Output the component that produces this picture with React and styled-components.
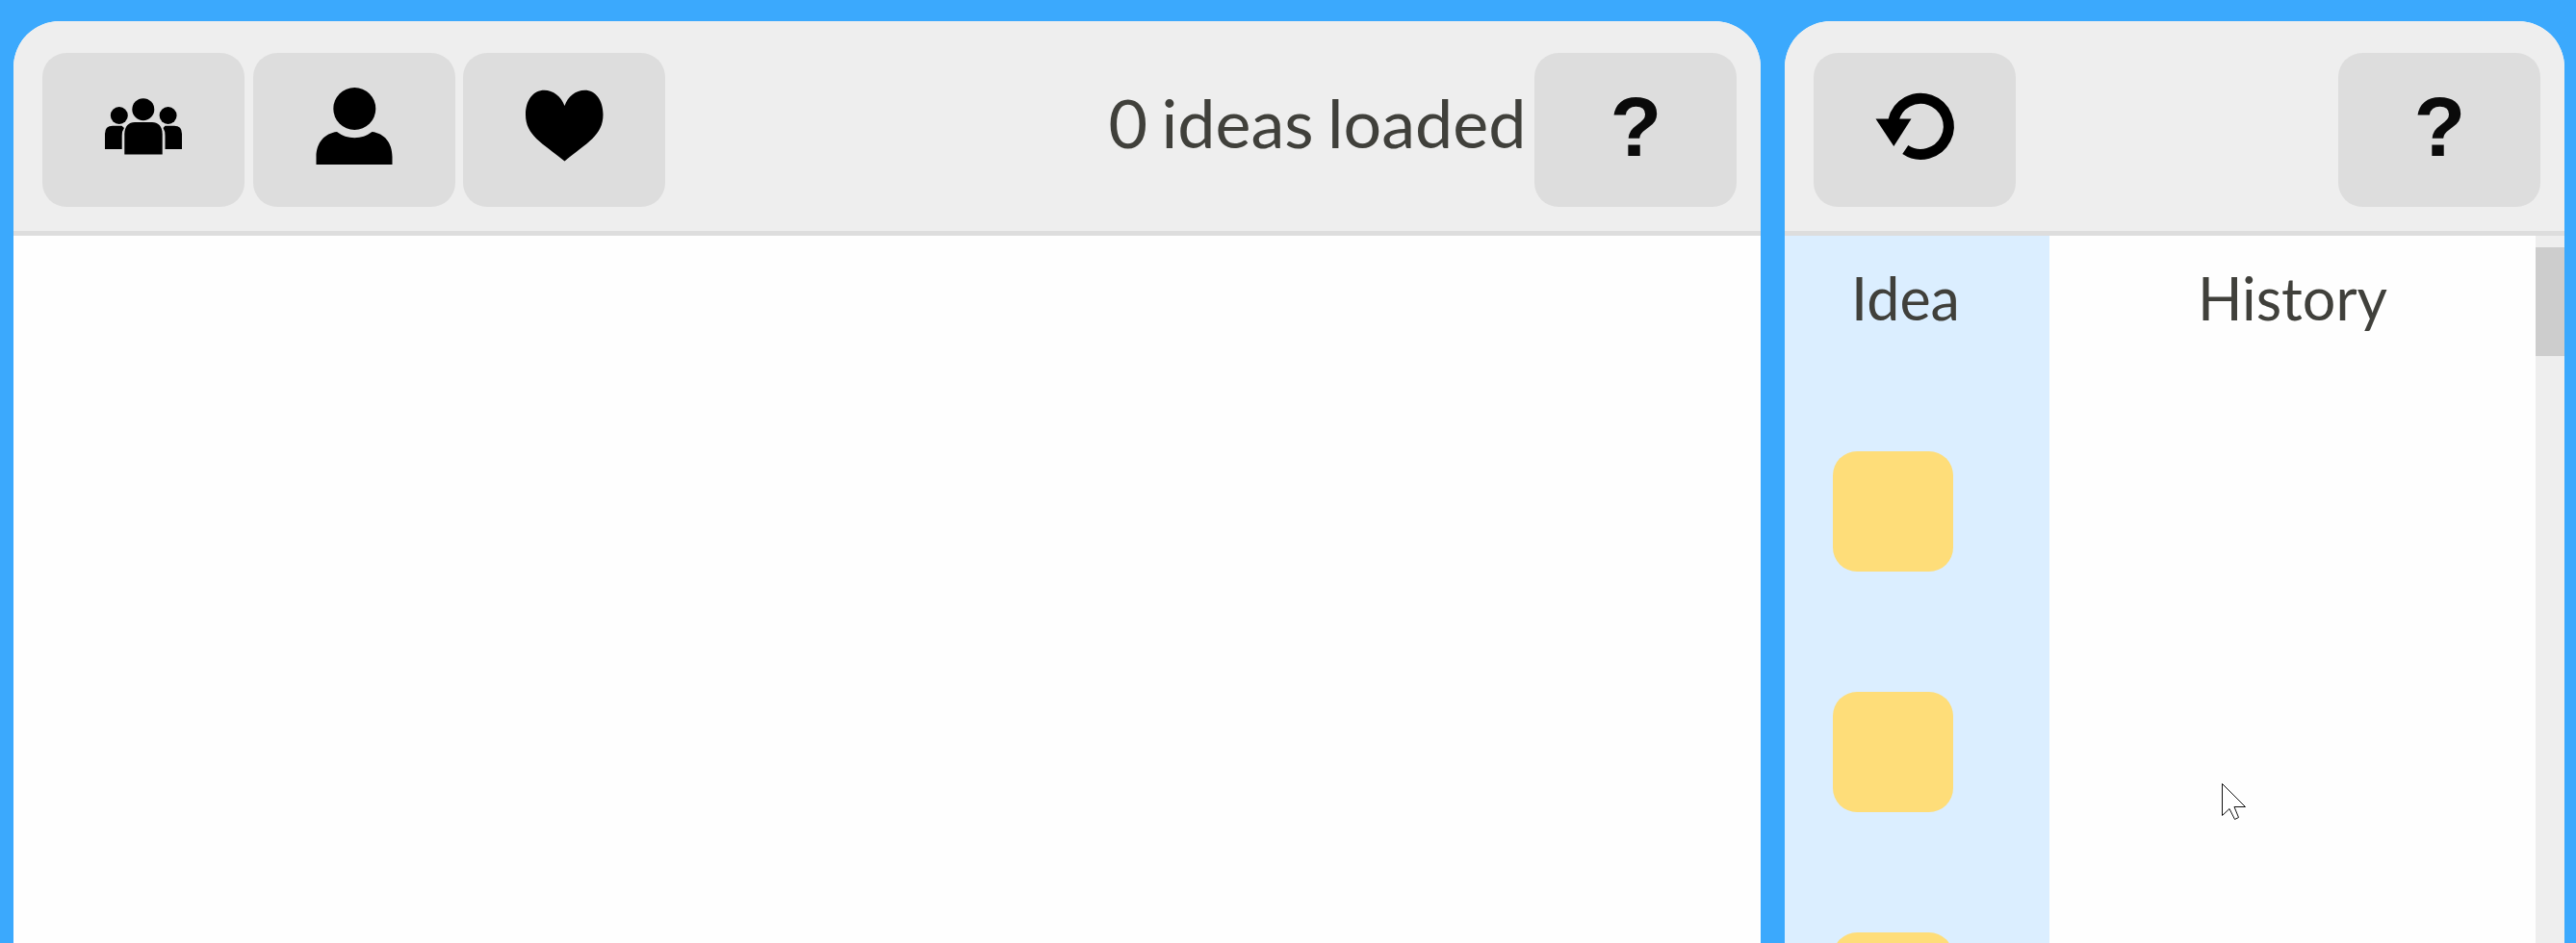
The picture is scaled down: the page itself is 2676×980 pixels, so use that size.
import React from "react";
import styled, { createGlobalStyle } from "styled-components";

const GlobalStyle = createGlobalStyle`
  * { box-sizing: border-box; }
  html, body { margin: 0; padding: 0; overflow: hidden; }
  body { background: #3ba9fd; color: #40403b; font-family: Lato, "Liberation Sans", sans-serif; }
`;

const Page = styled.main`
  display: flex;
  gap: 25px;
  width: 2676px;
  height: 980px;
  padding: 22px 12px 0 14px;
  overflow: hidden;
`;

const Panel = styled.section`
  display: flex;
  flex-direction: column;
  width: ${({ $width }) => $width}px;
  flex: none;
  background: #fefefe;
  border-radius: 48px 48px 0 0;
  overflow: hidden;
`;

const Toolbar = styled.header`
  display: flex;
  flex: none;
  align-items: flex-start;
  justify-content: space-between;
  height: 223px;
  padding: 33px 25px 0 30px;
  background: #eeeeee;
  border-bottom: 5px solid #dddddd;
`;

const Group = styled.div`
  display: flex;
  gap: ${({ $gap }) => $gap}px;
`;

const ToolButton = styled.button`
  display: flex;
  align-items: center;
  justify-content: center;
  flex: none;
  width: 210px;
  height: 160px;
  padding: 0 0 8px;
  border: 0;
  border-radius: 25px;
  background: #dddddd;
`;

const HelpButton = styled(ToolButton)`
  padding: 0 0 6px 1px;
  color: #0a0a0a;
  font: bold 88px/1 "Liberation Sans", sans-serif;
`;

const Icon = styled.svg`
  display: block;
  width: 80px;
  height: 80px;
  fill: #000;
  overflow: visible;
`;

const Status = styled.span`
  padding-top: 30px;
  font-size: 70px;
  line-height: 84px;
  word-spacing: -3.5px;
  white-space: nowrap;
`;

const Content = styled.div`
  display: flex;
  flex: 1;
  min-height: 0;
`;

const Column = styled.div`
  display: flex;
  flex-direction: column;
  width: ${({ $width }) => $width}px;
  background: ${({ $tint }) => $tint || "transparent"};
`;

const ColumnTitle = styled.h2`
  flex: none;
  height: 224px;
  margin: 0;
  padding: 29px ${({ $right }) => $right || 0}px 0 0;
  font-size: 61px;
  font-weight: 400;
  line-height: 72px;
  text-align: center;
`;

const Swatches = styled.div`
  display: flex;
  flex-direction: column;
  gap: 125px;
  padding: 0.3px 0 0 50px;
`;

const Swatch = styled.div`
  flex: none;
  width: 125px;
  height: 125px;
  border-radius: 25px;
  background: #fedd79;
`;

const Scrollbar = styled.div`
  width: 30px;
  padding-top: 12px;
  background: #eeeeee;
`;

const Thumb = styled.div`
  height: 113px;
  background: #cdcdcd;
`;

const Pointer = styled.svg`
  position: absolute;
  left: 2306px;
  top: 812px;
  width: 30px;
  height: 42px;
`;

const GroupIcon = () => (
  <Icon viewBox="0 0 80 80">
    <circle cx="14.8" cy="29" r="9" />
    <circle cx="65.6" cy="29" r="9" />
    <circle cx="39.8" cy="22.7" r="11.5" />
    <path d="M0 64V48Q0 39.7 8 39.7H17.5L20 42Q17.7 45 17.7 50V64Z" />
    <path d="M80 64V48Q80 39.7 72 39.7H62.5L60.5 42Q62.5 45 62.5 50V64Z" />
    <path d="M20.3 69.5V48.5C20.3 40 25 36 31 36H49C55 36 59.7 40 59.7 48.5V69.5Z" />
  </Icon>
);

const PersonIcon = () => (
  <Icon viewBox="0 0 80 80">
    <circle cx="40.3" cy="22" r="22" />
    <path d="M.5 80V72C.5 57 9.5 47.5 22 46Q30 52.2 40.3 52.2Q50.5 52.2 58.5 46C71 47.5 79.5 57 79.5 72V80Z" />
  </Icon>
);

const HeartIcon = () => (
  <Icon viewBox="0 0 80 80">
    <path d="M40.5 19C37 9 28.5 2.7 19.5 2.7C8 2.7 0 13 0 28C0 50 17 57 40.5 76.5C64 57 80.5 50 80.5 28C80.5 13 72.5 2.7 61.5 2.7C52 2.7 44 9 40.5 19Z" />
  </Icon>
);

const UndoIcon = () => (
  <Icon viewBox="0 0 80 80">
    <path
      d="M18 34A29 29 0 1 1 30.3 64.5"
      fill="none"
      stroke="#000"
      strokeWidth="11"
    />
    <path d="M-.5 32.5H36.5L18.3 61Z" />
  </Icon>
);

export default function App() {
  return (
    <>
      <GlobalStyle />
      <Page>
        <Panel $width={1815}>
          <Toolbar>
            <Group $gap={8.6}>
              <ToolButton aria-label="Everyone"><GroupIcon /></ToolButton>
              <ToolButton aria-label="Mine"><PersonIcon /></ToolButton>
              <ToolButton aria-label="Favourites"><HeartIcon /></ToolButton>
            </Group>
            <Group $gap={8.6}>
              <Status>0 ideas loaded</Status>
              <HelpButton>?</HelpButton>
            </Group>
          </Toolbar>
        </Panel>
        <Panel $width={810}>
          <Toolbar>
            <ToolButton aria-label="Undo"><UndoIcon /></ToolButton>
            <HelpButton>?</HelpButton>
          </Toolbar>
          <Content>
            <Column $width={275} $tint="#dbeeff">
              <ColumnTitle $right={24}>Idea</ColumnTitle>
              <Swatches>
                <Swatch />
                <Swatch />
                <Swatch />
              </Swatches>
            </Column>
            <Column $width={505}>
              <ColumnTitle>History</ColumnTitle>
            </Column>
            <Scrollbar><Thumb /></Scrollbar>
          </Content>
        </Panel>
      </Page>
      <Pointer viewBox="0 0 30 42">
        <path
          d="M2.5 2.5V35.5L10 28.5L15.5 39.5L19.5 37.5L15 26.5H26.5Z"
          fill="#fff"
          stroke="#111"
          strokeWidth="1"
        />
      </Pointer>
    </>
  );
}
